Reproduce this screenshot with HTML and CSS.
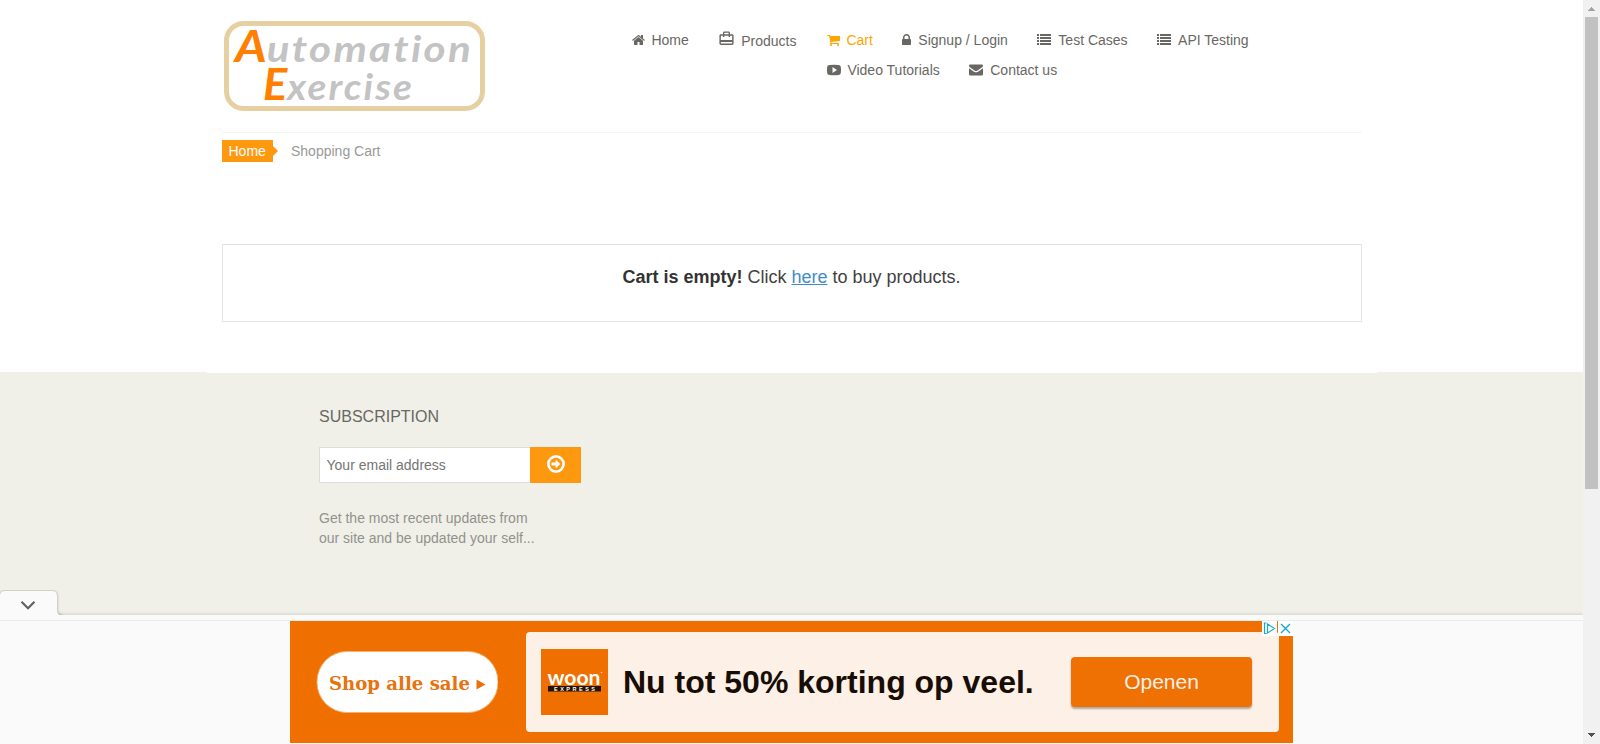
FILE: index.html
```html
<!DOCTYPE html>
<html lang="en">
<head>
<meta charset="utf-8">
<title>Automation Exercise - Cart</title>
<link rel="stylesheet" href="styles.css">
</head>
<body>
<div class="window">
  <div class="page">
    <header class="header">
      <svg class="logo" width="261" height="90" viewBox="0 0 261 90">
        <rect x="2.5" y="2.5" width="256" height="85" rx="17" fill="#fff" stroke="#e6d0a2" stroke-width="5"/>
        <g class="logo-text">
          <text x="11" y="41" textLength="238" lengthAdjust="spacingAndGlyphs"><tspan class="cap">A</tspan>utomation</text>
          <text x="39" y="79" textLength="151" lengthAdjust="spacingAndGlyphs"><tspan class="cap">E</tspan>xercise</text>
        </g>
      </svg>
      <nav class="nav">
        <a class="item"><svg width="13" height="14" viewBox="64 0 1664 1792"><path d="M1472 992v480q0 26-19 45t-45 19h-384v-384h-256v384h-384q-26 0-45-19t-19-45v-480q0-1 .5-3t.5-3l575-474 575 474q1 2 1 6zm223-69l-62 74q-8 9-21 11h-3q-13 0-21-7l-692-577-692 577q-12 8-24 7-13-2-21-11l-62-74q-8-10-7-23.5t11-21.5l719-599q32-26 76-26t76 26l244 204v-195q0-14 9-23t23-9h192q14 0 23 9t9 23v408l219 182q10 8 11 21.5t-7 23.5z"/></svg>Home</a>
        <a class="item products"><svg width="17" height="17" viewBox="0 0 24 24"><path d="M20 6h-3V4c0-1.11-.89-2-2-2H9c-1.11 0-2 .89-2 2v2H4c-1.11 0-2 .89-2 2v11c0 1.11.89 2 2 2h16c1.11 0 2-.89 2-2V8c0-1.11-.89-2-2-2zM9 4h6v2H9V4zm11 15H4v-2h16v2zm0-5H4V8h3v2h2V8h6v2h2V8h3v6z"/></svg>Products</a>
        <div class="nav-rest">
          <a class="item active"><svg width="13" height="14" viewBox="64 0 1664 1792"><path d="M704 1536q0 52-38 90t-90 38-90-38-38-90 38-90 90-38 90 38 38 90zm896 0q0 52-38 90t-90 38-90-38-38-90 38-90 90-38 90 38 38 90zm128-1088v512q0 24-16.5 42.5t-40.5 21.5l-1044 122q13 60 13 70 0 16-24 64h920q26 0 45 19t19 45-19 45-45 19h-1024q-26 0-45-19t-19-45q0-11 8-31.5t16-36 21.5-40 15.5-29.5l-177-823h-204q-26 0-45-19t-19-45 19-45 45-19h256q16 0 28.5 6.5t19.5 15.5 13 24.5 8 26 5.5 29.5 4.5 26h1201q26 0 45 19t19 45z"/></svg>Cart</a>
          <a class="item"><svg width="9" height="14" viewBox="320 0 1152 1792"><path d="M640 768h512v-192q0-106-75-181t-181-75-181 75-75 181v192zm832 96v576q0 40-28 68t-68 28h-960q-40 0-68-28t-28-68v-576q0-40 28-68t68-28h32v-192q0-184 132-316t316-132 316 132 132 316v192h32q40 0 68 28t28 68z"/></svg>Signup / Login</a>
          <a class="item"><svg width="14" height="14" viewBox="0 0 14 14"><path d="M0 1h2v2H0zM3 1h11v2H3zM0 4h2v2H0zM3 4h11v2H3zM0 7h2v2H0zM3 7h11v2H3zM0 10h2v2H0zM3 10h11v2H3z"/></svg>Test Cases</a>
          <a class="item"><svg width="14" height="14" viewBox="0 0 14 14"><path d="M0 1h2v2H0zM3 1h11v2H3zM0 4h2v2H0zM3 4h11v2H3zM0 7h2v2H0zM3 7h11v2H3zM0 10h2v2H0zM3 10h11v2H3z"/></svg>API Testing</a>
          <a class="item"><svg width="14" height="14" viewBox="0 0 14 14"><path fill-rule="evenodd" d="M2.5 2Q7 1.6 11.500 2Q13.600 2.100 13.800 4Q14.200 7 13.800 10Q13.600 11.900 11.500 12Q7 12.400 2.500 12Q.4 11.900 .2 10Q-.2 7 .2 4Q.4 2.100 2.500 2zM5.500 4v6L10 7z"/></svg>Video Tutorials</a>
          <a class="item"><svg width="14" height="14" viewBox="0 0 14 14"><path d="M1.200 1.500h11.600Q14 1.500 14 2.700Q14 3.700 12.800 4.600L8.500 7.600Q7 8.600 5.500 7.600L1.200 4.600Q0 3.600 0 2.700Q0 1.500 1.200 1.500zM0 5.200L5 8.700Q7 9.900 9 8.700L14 5.200V11.200Q14 12.500 12.800 12.500H1.200Q0 12.500 0 11.200z"/></svg>Contact us</a>
        </div>
      </nav>
    </header>
    <main class="main">
      <ol class="crumbs"><li class="crumb-home">Home</li><li>Shopping Cart</li></ol>
      <section class="empty"><p><b>Cart is empty!</b> Click <a class="link">here</a> to buy products.</p></section>
    </main>
    <footer class="footer">
      <div class="footer-edge"></div>
      <div class="subscribe">
        <h2>SUBSCRIPTION</h2>
        <form class="form">
          <input class="email" type="text" placeholder="Your email address">
          <button class="send" type="button"><svg width="18" height="18" viewBox="0 0 18 18"><circle cx="9" cy="9" r="7.600" fill="none" stroke="#fff" stroke-width="2.600"/><path fill="#fff" d="M4.500 7.600h4.200V4.700L13.500 9l-4.800 4.300v-2.900H4.500z"/></svg></button>
        </form>
        <p>Get the most recent updates from<br>our site and be updated your self...</p>
      </div>
    </footer>
    <aside class="anchor">
      <svg class="tab" width="64" height="25" viewBox="0 0 64 25">
        <path class="tab-shape" d="M0 32V5Q.5 1 5 1H52Q57 1 57 6V20Q57 25 62 25.500V32z"/>
        <path d="M21.500 11.800L28 18.300L34.500 11.800" fill="none" stroke="#5f6164" stroke-width="2.200"/>
      </svg>
      <div class="strip"></div>
      <div class="ad-area">
        <div class="ad">
          <svg class="pill" width="182" height="62" viewBox="0 0 182 62">
            <rect x="1" y=".5" width="181" height="61" rx="30" fill="#fff" stroke="#f6b070"/>
            <text class="pill-text" x="13" y="38.500" textLength="141" lengthAdjust="spacingAndGlyphs">Shop alle sale</text>
            <path d="M160.500 28.500L169.500 33.500L160.500 38.500z" fill="#e8720c"/>
          </svg>
          <div class="offer">
            <svg class="brand" width="67" height="66" viewBox="0 0 67 66">
              <rect width="67" height="66" fill="#ef6f00"/>
              <text class="brand-name" x="6.500" y="36" textLength="53" lengthAdjust="spacingAndGlyphs">woon</text>
              <circle cx="60.500" cy="23.500" r=".8" fill="#f9c9a0"/>
              <rect x="7" y="37" width="53" height="5.500" fill="#241204"/>
              <text class="brand-sub" x="13" y="41.800" textLength="41">EXPRESS</text>
            </svg>
            <div class="headline">Nu tot 50% korting op veel.</div>
            <div class="open">Openen</div>
          </div>
          <div class="choices">
            <svg width="15" height="15" viewBox="0 0 15 15"><rect width="15" height="15" fill="#fff"/><path d="M4.500 2H2.500V12.500H4.500M5.500 3L12.500 7.500L5.500 12zM5.500 5V10" fill="none" stroke="#16a9cf" stroke-width="1.200"/></svg>
            <svg width="15" height="15" viewBox="0 0 15 15"><rect width="15" height="15" fill="#fff"/><path d="M3 3L12 12M12 3L3 12" stroke="#16a9cf" stroke-width="1.400"/></svg>
          </div>
        </div>
      </div>
    </aside>
  </div>
  <div class="scrollbar">
    <svg width="17" height="17" viewBox="0 0 17 17" shape-rendering="crispEdges"><path fill="#a3a3a3" d="M8 7h1v1h1v1h1v1h1v1H5v-1h1V9h1V8h1z"/></svg>
    <div class="thumb"></div>
    <svg class="down" width="17" height="17" viewBox="0 0 17 17" shape-rendering="crispEdges"><path fill="#505050" d="M5 6h7v1h-1v1h-1v1H9v1H8V9H7V8H6V7H5z"/></svg>
  </div>
</div>
</body>
</html>
```
FILE: styles.css
```css
* { box-sizing: border-box; }
body { margin: 0; overflow: hidden; background: #fff; font: 14px/20px "Liberation Sans", Arial, sans-serif; color: #696763; }
svg { display: block; flex: none; }
p, h2, ol { margin: 0; padding: 0; }
.window { display: flex; height: 744px; }
.page { width: 1583px; height: 744px; display: flex; flex-direction: column; overflow: hidden; }

.header { width: 1140px; height: 133px; margin-left: 222px; padding: 21px 0 0 2px; display: flex; align-items: flex-start; border-bottom: 1px solid #f5f5f5; }
.logo-text { font: italic 700 37px Lato, sans-serif; font-variant-ligatures: none; letter-spacing: 2px; fill: #c3c3c3; }
.logo-text .cap { font-size: 43px; letter-spacing: 0; fill: #ff8000; }
.nav { display: flex; gap: 30px; margin: 9px 0 0 146.500px; }
.nav-rest { display: flex; flex-wrap: wrap; gap: 10px 29.600px; width: 450px; }
.item { display: flex; align-items: center; gap: 6.900px; height: 20px; white-space: nowrap; }
.item svg { fill: currentColor; }
.products { margin-top: 1px; gap: 6px; }
.products svg { margin: -6px 0 0 -.5px; }
.active { color: #ffa500; }

.main { padding: 7px 221px 0 222px; height: 239px; }
.crumbs { display: flex; list-style: none; color: #999; line-height: 22px; }
.crumb-home { position: relative; width: 51px; margin-right: 18px; padding-left: 6.500px; background: #fe980f; color: #fff; }
.crumb-home::after { content: ""; position: absolute; left: 51px; top: 6px; border: 5px solid transparent; border-left-color: #fe980f; border-right: 0; }
.empty { margin-top: 82px; height: 78px; border: 1px solid #e3e3e0; padding: 22px 1px 0 0; text-align: center; font-size: 18px; color: #3f3f3f; }
.empty b { color: #333; }
.link { color: #428bca; text-decoration: underline; }

.footer { flex: none; height: 243px; background: #f0f0e9; }
.footer-edge { width: 1170px; height: 1px; margin-left: 207px; background: #fff; }
.subscribe { width: 262px; margin-left: 319px; padding-top: 34px; }
.subscribe h2 { font-size: 16px; font-weight: 400; line-height: 20px; }
.form { display: flex; margin: 20px 0 25px; }
.email { width: 211px; height: 36px; border: 1px solid #ddd; border-right: 0; padding: 0 7px 0 6.500px; background: #fff; font: 14px "Liberation Sans", Arial, sans-serif; }
.email::placeholder { color: #757575; }
.send { width: 51px; height: 36px; padding: 0 0 2px; border: 0; background: #fe980f; display: flex; align-items: center; justify-content: center; }
.subscribe p { color: #92928d; }

.anchor { position: relative; flex: none; height: 129px; background: #fafafa; box-shadow: 0 0 4px rgba(0, 0, 0, .2); }
.tab { position: absolute; left: 0; top: -25px; }
.tab-shape { fill: #fafafa; filter: drop-shadow(0 0 1.500px rgba(0, 0, 0, .35)); }
.strip { height: 6px; border-bottom: 1px solid #ebebeb; }
.ad-area { padding-left: 290px; }
.ad { position: relative; display: flex; align-items: center; width: 1003px; height: 122px; padding-left: 26px; background: #ef6f00; }
.offer { display: flex; align-items: center; width: 753px; height: 100px; margin-left: 28px; padding-left: 15px; border-radius: 4px; background: #fdf0e6; }
.pill-text { font: 700 19px "DejaVu Serif", serif; fill: #e8720c; }
.brand-name { font: 700 21px Lato, sans-serif; fill: #fff; }
.brand-sub { font: 700 5.500px "Liberation Sans", sans-serif; fill: #fff; }
.headline { width: 447px; padding-left: 15px; font-size: 32px; line-height: 36px; font-weight: 700; color: #170d04; white-space: nowrap; }
.open { width: 181px; height: 50px; margin-left: 16px; border-radius: 4px; background: #ef7104; box-shadow: 0 2px 2px rgba(0, 0, 0, .3); color: #fdf0e6; font-size: 21px; line-height: 50px; text-align: center; }
.choices { position: absolute; right: 0; top: 0; display: flex; gap: 1px; }

.scrollbar { width: 17px; background: #f1f1f1; display: flex; flex-direction: column; align-items: center; }
.thumb { width: 13px; height: 472px; background: #c1c1c1; }
.down { margin-top: auto; }
```
